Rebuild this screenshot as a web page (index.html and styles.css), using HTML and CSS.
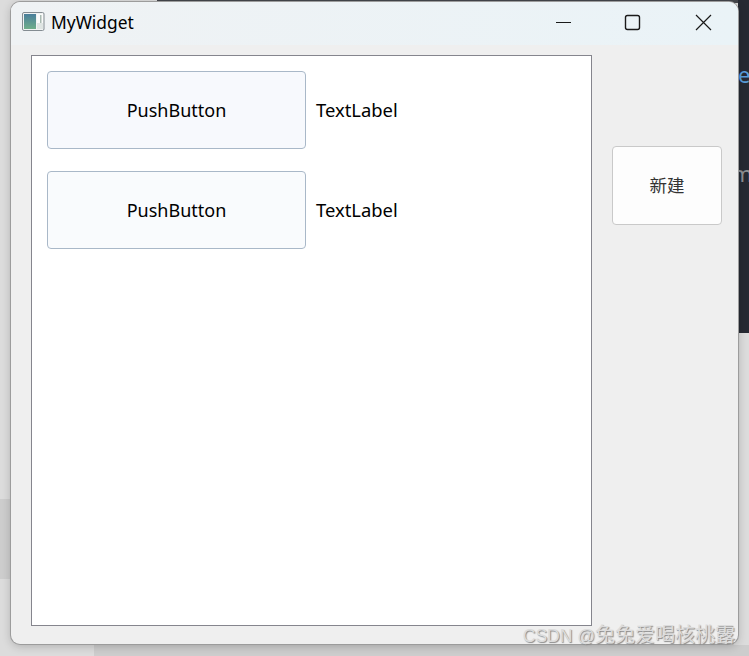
FILE: index.html
```html
<!DOCTYPE html>
<html lang="zh-CN">
<head>
	<meta charset="UTF-8">
	<title>MyWidget</title>
	<link rel="stylesheet" href="styles.css">
</head>
<body>
	<!-- what is showing behind the window -->
	<div class="backdrop">
		<div class="backdrop-top"></div>
		<div class="backdrop-right">
			<span class="peek peek-e">e</span>
			<span class="peek peek-m">m</span>
		</div>
		<div class="backdrop-left"></div>
		<div class="backdrop-bottom"></div>
	</div>

	<div class="window">
		<header class="titlebar">
			<svg class="app-icon" width="23" height="20" viewBox="0 0 23 20">
				<defs>
					<linearGradient id="pane" x1="0" y1="0" x2="0" y2="1">
						<stop offset="0" stop-color="#4a7f9c"/>
						<stop offset="1" stop-color="#6fae8a"/>
					</linearGradient>
				</defs>
				<rect x="0.5" y="0.5" width="21.5" height="18" rx="1.5" fill="#f1f3f3" stroke="#848c92"/>
				<rect x="2" y="2" width="12" height="15" fill="url(#pane)"/>
				<rect x="15" y="2" width="6" height="9" fill="#fafbfb"/>
				<rect x="15" y="11" width="6" height="6" fill="#dfe5e3"/>
				<rect x="18" y="3" width="1.5" height="8" fill="#a9bab2"/>
			</svg>
			<span class="title">MyWidget</span>
			<div class="caption-buttons">
				<svg class="caption" width="70" height="40" viewBox="0 0 70 40"><path d="M28 20.5h15" stroke="#1a1a1a" stroke-width="1.2" fill="none"/></svg>
				<svg class="caption" width="70" height="40" viewBox="0 0 70 40"><rect x="27.5" y="13.5" width="14" height="14" rx="2" stroke="#1a1a1a" stroke-width="1.4" fill="none"/></svg>
				<svg class="caption" width="70" height="40" viewBox="0 0 70 40"><path d="M28 13l15 15M43 13l-15 15" stroke="#1a1a1a" stroke-width="1.2" fill="none"/></svg>
			</div>
		</header>

		<div class="content">
			<section class="panel">
				<div class="row">
					<button class="push-btn tint-a">PushButton</button>
					<span class="label">TextLabel</span>
				</div>
				<div class="row">
					<button class="push-btn tint-b">PushButton</button>
					<span class="label">TextLabel</span>
				</div>
			</section>
			<aside class="side">
				<button class="new-btn">新建</button>
			</aside>
		</div>
	</div>

	<div class="watermark">CSDN @<span class="watermark-cjk">兔兔爱喝核桃露</span></div>
</body>
</html>
```

FILE: styles.css
```css
* {
	box-sizing: border-box;
}

html, body {
	height: 100%;
	margin: 0;
}

body {
	position: relative;
	overflow: hidden;
	padding: 2px 0 0 11px;
	background: #dcdcdc;
	font-family: "Noto Sans", "Liberation Sans", sans-serif;
	color: #000;
}

/* backdrop */
.backdrop-top {
	position: absolute;
	top: 0;
	left: 157px;
	right: 0;
	height: 3px;
	background: #44464b;
}

.backdrop-right {
	position: absolute;
	top: 0;
	right: 0;
	width: 11px;
	height: 333px;
	background: #262a33;
	overflow: hidden;
}

.peek {
	position: absolute;
	font-size: 22px;
	line-height: 20px;
}

.peek-e {
	top: 64px;
	left: 0;
	color: #5a9fdc;
}

.peek-m {
	top: 163px;
	left: -6px;
	color: #8e9094;
}

.backdrop-left {
	position: absolute;
	left: 0;
	top: 499px;
	width: 11px;
	height: 80px;
	background: #cdcdcd;
}

.backdrop-bottom {
	position: absolute;
	left: 94px;
	right: 0;
	bottom: 0;
	height: 11px;
	background: #cdcdcd;
}

/* window */
.window {
	position: relative;
	display: flex;
	flex-direction: column;
	width: 727px;
	height: 642px;
	background: #efefef;
	border-radius: 9px;
	overflow: hidden;
	box-shadow: 0 0 0 1px #9c9c9c, 0 2px 10px rgb(0 0 0 / 0.22);
}

.titlebar {
	display: flex;
	align-items: center;
	flex: none;
	height: 43px;
	padding: 0 0 3px 11px;
	background: linear-gradient(to right, #eff2f4, #eaf3f7);
}

.app-icon {
	flex: none;
	margin-right: 6px;
}

.title {
	font-size: 17.4px;
}

.caption-buttons {
	display: flex;
	margin-left: auto;
}

.content {
	display: flex;
	flex: 1;
	padding: 10px 16px 18px 20px;
	gap: 20px;
}

.panel {
	display: flex;
	flex-direction: column;
	gap: 22px;
	width: 561px;
	padding: 15px;
	background: #fff;
	border: 1px solid #85858d;
}

.row {
	display: flex;
	align-items: center;
	gap: 10px;
}

.push-btn {
	width: 259px;
	height: 78px;
	padding: 0;
	border: 1px solid #a9b8c8;
	border-radius: 4px;
	font: inherit;
	font-size: 18px;
	color: #000;
}

.tint-a {
	background: #f7f9fd;
}

.tint-b {
	background: #f9fbfd;
}

.label {
	padding-bottom: 2px;
	font-size: 18.4px;
}

.side {
	flex: 1;
	padding-top: 91px;
}

.new-btn {
	display: block;
	width: 110px;
	height: 79px;
	padding: 0 0 2px;
	background: #fdfdfd;
	border: 1px solid #c9c9c9;
	border-radius: 4px;
	font-family: "Noto Sans CJK SC", sans-serif;
	font-size: 17.5px;
	color: #333;
}

.watermark {
	position: absolute;
	right: 14px;
	bottom: 9px;
	font-family: "Liberation Sans", "Noto Sans CJK SC", sans-serif;
	font-size: 17.5px;
	line-height: 22px;
	color: #dcdcdc;
	text-shadow: 1px 1px 1px #8a8a8a;
	white-space: nowrap;
}

.watermark-cjk {
	font-family: "Noto Sans CJK SC", sans-serif;
	font-size: 20px;
}
```
